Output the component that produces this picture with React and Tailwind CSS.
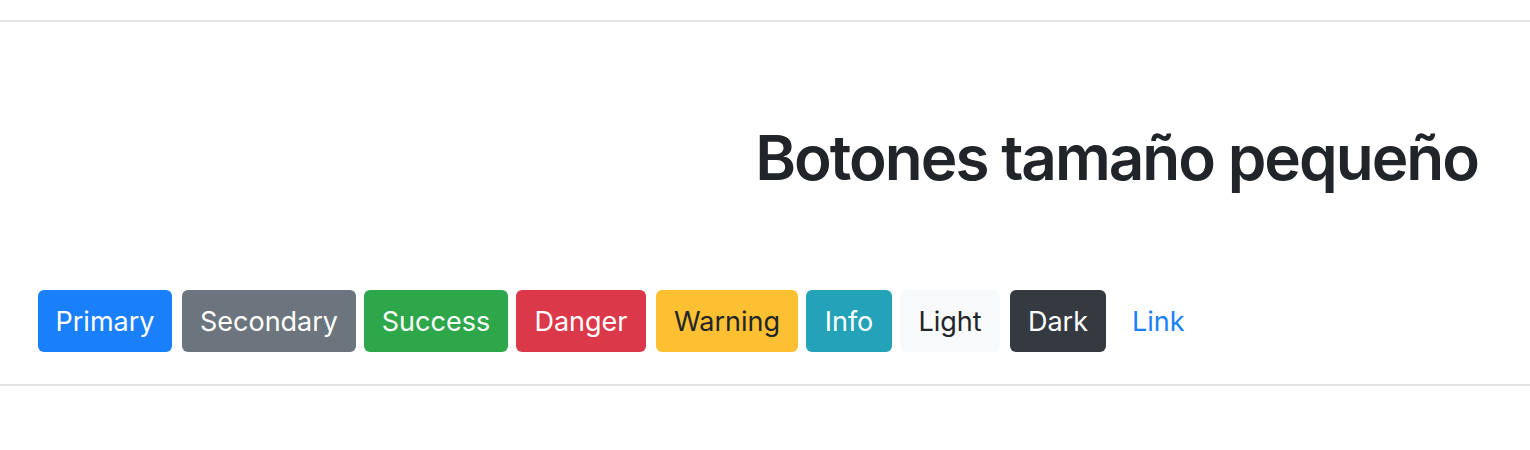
export default function App() {
  const buttons = [
    { label: "Primary", cls: "w-[134px] bg-[#1a7ffa] text-white" },
    { label: "Secondary", cls: "w-[174px] ml-[10px] bg-[#6c757d] text-white" },
    { label: "Success", cls: "w-[144px] ml-[8px] bg-[#2ea74b] text-white" },
    { label: "Danger", cls: "w-[130px] ml-[8px] bg-[#db3849] text-white" },
    { label: "Warning", cls: "w-[142px] ml-[10px] bg-[#fdc032] text-[#212529]" },
    { label: "Info", cls: "w-[86px] ml-[8px] bg-[#24a2b8] text-white" },
    { label: "Light", cls: "w-[100px] ml-[8px] bg-[#f8f9fa] text-[#212529]" },
    { label: "Dark", cls: "w-[96px] ml-[10px] bg-[#343a40] text-white" },
  ];

  return (
    <div className="w-[1530px] h-[450px] bg-white font-['Inter','Liberation_Sans',sans-serif]">
      <div className="h-[20px]" />
      <div className="border-t-2 border-[#e5e5e5]" />
      <div className="pt-[97px] pr-[52px] text-right">
        <h2 className="text-[62px] leading-[77px] font-semibold text-[#212529] tracking-[-2px]">
          Botones tamaño pequeño
        </h2>
      </div>
      <div className="flex items-center pl-[38px] pt-[94px]">
        {buttons.map((b) => (
          <button
            key={b.label}
            className={`h-[62px] rounded-[6px] text-[27px] flex items-center justify-center pt-[2px] ${b.cls}`}
          >
            {b.label}
          </button>
        ))}
        <button className="h-[62px] ml-[10px] px-[16px] pt-[2px] text-[27px] text-[#1a7ffa]">
          Link
        </button>
      </div>
      <div className="mt-[32px] border-t-2 border-[#e5e5e5]" />
    </div>
  );
}
